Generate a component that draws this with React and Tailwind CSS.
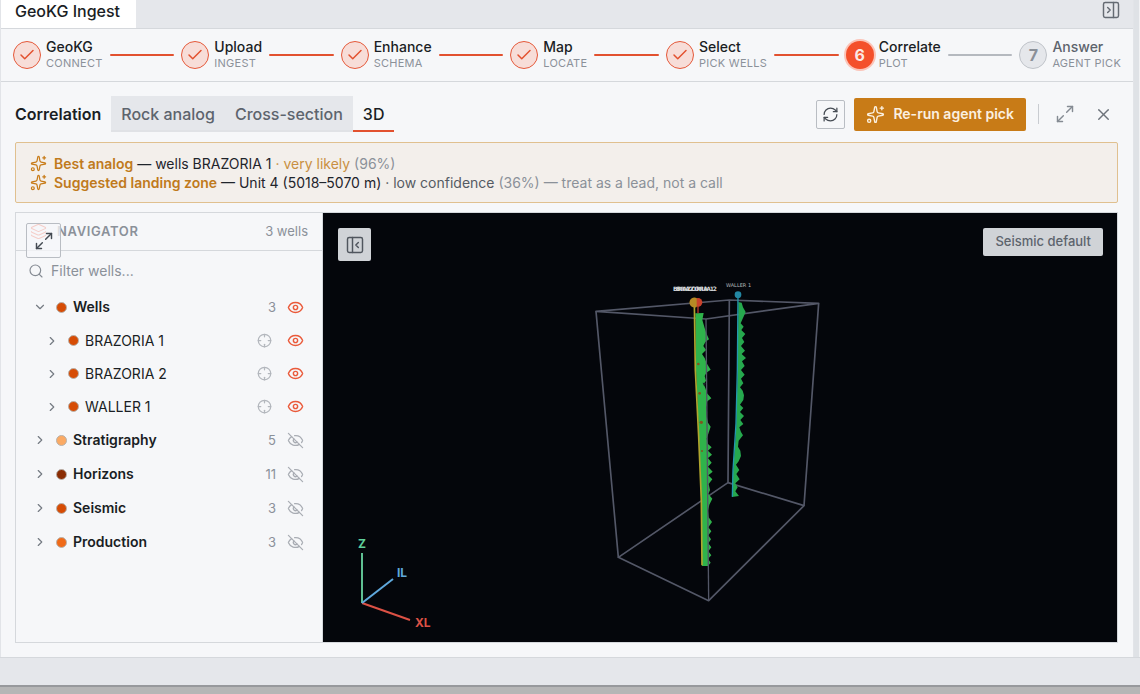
import { Fragment, useState } from 'react';
import {
	Check,
	ChevronDown,
	ChevronRight,
	Crosshair,
	Eye,
	EyeOff,
	Layers,
	Maximize2,
	PanelLeftClose,
	PanelRightClose,
	RefreshCw,
	Search,
	Sparkles,
	X,
} from 'lucide-react';

const STEPS = [
	{ title: 'GeoKG', sub: 'Connect' },
	{ title: 'Upload', sub: 'Ingest' },
	{ title: 'Enhance', sub: 'Schema' },
	{ title: 'Map', sub: 'Locate' },
	{ title: 'Select', sub: 'Pick wells' },
	{ title: 'Correlate', sub: 'Plot' },
	{ title: 'Answer', sub: 'Agent pick' },
];
const CURRENT_STEP = 5;

const TABS = ['Rock analog', 'Cross-section', '3D'];

const LAYERS = [
	{ name: 'Wells', count: 3, dot: 'bg-[#d64c05]', visible: true, items: ['BRAZORIA 1', 'BRAZORIA 2', 'WALLER 1'] },
	{ name: 'Stratigraphy', count: 5, dot: 'bg-[#fbaa64]' },
	{ name: 'Horizons', count: 11, dot: 'bg-[#8a2d04]' },
	{ name: 'Seismic', count: 3, dot: 'bg-[#d64c05]' },
	{ name: 'Production', count: 3, dot: 'bg-[#f06a18]' },
];

function StepBadge({ index }) {
	if (index < CURRENT_STEP) {
		return (
			<span className="flex size-7 shrink-0 items-center justify-center rounded-full border border-[#e5593a] bg-[#f7ddd8] text-[#e2512f]">
				<Check size={18} strokeWidth={2} />
			</span>
		);
	}
	if (index === CURRENT_STEP) {
		return (
			<span className="flex size-7 shrink-0 items-center justify-center rounded-full bg-[#f4502b] text-base font-bold text-[#fbe9e4] ring-2 ring-[#fbc4b8]">
				{index + 1}
			</span>
		);
	}
	return (
		<span className="flex size-7 shrink-0 items-center justify-center rounded-full border border-[#bfc3c9] bg-[#e5e7eb] text-base font-bold text-[#8b9098]">
			{index + 1}
		</span>
	);
}

function Stepper() {
	return (
		<nav className="flex h-[53px] shrink-0 items-center border-b border-[#d5d8dc] pr-3 pl-3">
			{STEPS.map((step, i) => (
				<Fragment key={step.title}>
					{i > 0 && (
						<span className={`mx-[7px] h-[2px] flex-1 rounded-full ${i <= CURRENT_STEP ? 'bg-[#e2512f]' : 'bg-[#b5b9bf]'}`} />
					)}
					<div className="flex items-center gap-[5px] whitespace-nowrap">
						<StepBadge index={i} />
						<div>
							<div className={`text-sm leading-4 font-medium ${i > CURRENT_STEP ? 'text-[#5d646d]' : 'text-[#1a1e24]'}`}>{step.title}</div>
							<div className="text-[11px] leading-4 tracking-wide text-[#8b9199] uppercase">{step.sub}</div>
						</div>
					</div>
				</Fragment>
			))}
		</nav>
	);
}

function Toolbar() {
	const [tab, setTab] = useState('3D');
	return (
		<div className="flex h-[60px] shrink-0 items-center pt-1">
			<h1 className="mr-[10px] text-base font-semibold">Correlation</h1>
			<div role="tablist" className="flex">
				{TABS.map((name) => (
					<button
						key={name}
						role="tab"
						aria-selected={tab === name}
						onClick={() => setTab(name)}
						className={`h-9 border-b-2 px-[10px] pt-[2px] text-base font-medium ${tab === name ? 'border-[#e2512f]' : 'border-[#e0e2e6] bg-[#e5e7eb] text-[#5d646d]'}`}
					>
						{name}
					</button>
				))}
			</div>
			<div className="ml-auto flex items-center">
				<button aria-label="Refresh" className="flex size-[29px] items-center justify-center rounded-[2px] border border-[#b9bdc3] text-[#454b53]">
					<RefreshCw size={17} strokeWidth={1.75} />
				</button>
				<button className="ml-[9px] flex h-[33px] items-center gap-2 rounded-[2px] bg-[#c87b17] px-3 text-sm font-semibold text-[#fbf0e0]">
					<Sparkles size={19} strokeWidth={1.75} />
					Re-run agent pick
				</button>
				<span className="mr-[11px] ml-3 h-5 w-px bg-[#c9ccd1]" />
				<button aria-label="Expand" className="flex size-[30px] items-center justify-center text-[#858b93]">
					<Maximize2 size={20} strokeWidth={1.75} />
				</button>
				<button aria-label="Close" className="ml-2 flex size-[30px] items-center justify-center text-[#6d737b]">
					<X size={19} strokeWidth={1.75} />
				</button>
			</div>
		</div>
	);
}

function Suggestions() {
	return (
		<div className="shrink-0 rounded-[2px] border border-[#e0c08f] bg-[#f3efeb] px-[14px] pt-[11px] pb-[10px] text-sm leading-[19px] text-[#1f242b]">
			<p className="flex items-center gap-[7px]">
				<Sparkles size={17} strokeWidth={1.75} className="text-[#c87b17]" />
				<span>
					<b className="font-semibold text-[#c07a1c]">Best analog</b> — wells BRAZORIA 1 <span className="text-[#c98f42]">· very likely</span>{' '}
					<span className="text-[#8b9199]">(96%)</span>
				</span>
			</p>
			<p className="flex items-center gap-[7px]">
				<Sparkles size={17} strokeWidth={1.75} className="text-[#c87b17]" />
				<span>
					<b className="font-semibold text-[#c07a1c]">Suggested landing zone</b> — Unit 4 (5018–5070 m) <span className="text-[#555b63]">· low confidence</span>{' '}
					<span className="text-[#8b9199]">(36%) — treat as a lead, not a call</span>
				</span>
			</p>
		</div>
	);
}

function VisibilityButton({ name, visible }) {
	return (
		<button aria-label={`Toggle ${name}`} className={`ml-[11px] ${visible ? 'text-[#ea5a3a]' : 'text-[#a9adb4]'}`}>
			{visible ? <Eye size={17} strokeWidth={2} /> : <EyeOff size={17} strokeWidth={1.75} />}
		</button>
	);
}

function LayerGroup({ layer }) {
	const [open, setOpen] = useState(Boolean(layer.items));
	const Chevron = open ? ChevronDown : ChevronRight;
	return (
		<li>
			<div className="flex h-[34px] items-center pr-[18px] pl-[17px]">
				<button aria-label={`Expand ${layer.name}`} onClick={() => setOpen(!open)} className="text-[#757b83]">
					<Chevron size={14} strokeWidth={2} />
				</button>
				<span className={`mr-[6px] ml-[9px] size-[11px] rounded-full border border-[#b9b2ab] ${layer.dot}`} />
				<span className="font-semibold">{layer.name}</span>
				<span className="ml-auto text-[13px] text-[#8b9199]">{layer.count}</span>
				<VisibilityButton name={layer.name} visible={layer.visible} />
			</div>
			{open && layer.items && (
				<ul>
					{layer.items.map((name) => (
						<li key={name} className="flex h-[33px] items-center pr-[18px] pl-[29px]">
							<button aria-label={`Expand ${name}`} className="text-[#757b83]">
								<ChevronRight size={14} strokeWidth={2} />
							</button>
							<span className="mr-[6px] ml-[9px] size-[11px] rounded-full border border-[#b9b2ab] bg-[#d64c05]" />
							<span>{name}</span>
							<button aria-label={`Locate ${name}`} className="mr-1 ml-auto text-[#b3b7bd]">
								<Crosshair size={15} strokeWidth={2} />
							</button>
							<VisibilityButton name={name} visible />
						</li>
					))}
				</ul>
			)}
		</li>
	);
}

function Navigator() {
	return (
		<aside className="relative flex w-[307px] shrink-0 flex-col border-r border-[#d5d8dc]">
			<div className="flex h-[38px] shrink-0 items-center border-b border-[#d5d8dc] pr-[14px] pl-[14px]">
				<Layers size={17} strokeWidth={1.5} className="text-[#f0553a]" />
				<h2 className="ml-[10px] text-[13px] font-semibold tracking-wider text-[#8b9199] uppercase">Navigator</h2>
				<span className="ml-auto text-[13px] text-[#8b9199]">3 wells</span>
			</div>
			<button
				aria-label="Expand navigator"
				className="absolute top-[10px] left-[10px] flex size-[35px] items-center justify-center rounded-[2px] border border-[#b9bdc3] bg-[#f6f7f9]/75 text-[#454b53]"
			>
				<Maximize2 size={20} strokeWidth={1.75} />
			</button>
			<label className="flex h-[39px] shrink-0 items-center gap-[7px] pr-4 pl-3 text-[#858b93]">
				<Search size={16} strokeWidth={1.75} />
				<input type="text" aria-label="Filter wells" placeholder="Filter wells..." className="min-w-0 flex-1 text-sm outline-none placeholder:text-[#8b9199]" />
			</label>
			<ul className="text-sm">
				{LAYERS.map((layer) => (
					<LayerGroup key={layer.name} layer={layer} />
				))}
			</ul>
		</aside>
	);
}

function Scene() {
	return (
		<svg viewBox="-771 -171 2382 1287" className="absolute inset-0 h-full w-full">
			<g fill="none" stroke="#535767" strokeWidth="5" strokeLinejoin="round">
				<path d="M48 124 448 90 716 100 378 147Z" />
				<path d="M115 862 444 638 672 707 386 992Z" />
				<path d="M48 124 115 862M448 90 444 638M716 100 672 707" />
			</g>
			{/* WALLER 1 */}
			<path
				fill="#26a84e"
				d="M475 96 485 98 489 112 497 126 488 146 482 160 491 170 484 180 496 192 486 204 493 216 483 228 495 242 485 252 498 264 486 274 494 288 483 300 494 314 483 326 490 340 480 352 488 362 492 376 490 390 480 404 490 414 480 426 492 438 481 450 490 462 478 472 483 486 489 496 476 512 474 530 481 542 483 558 476 574 468 584 478 600 469 612 479 628 466 640 473 652 466 664 477 678 456 681 458 620 468 480 473 300Z"
			/>
			<path fill="none" stroke="#2397ae" strokeWidth="4" d="M474 74 472 300 468 460 459 600 457 680" />
			<circle cx="474" cy="74" r="10" fill="#2387a3" />
			{/* BRAZORIA 1 and 2 */}
			<path
				fill="#2fb34b"
				d="M346 130 371 129 367 150 374 174 379 190 387 208 376 216 370 228 378 240 366 252 374 264 380 280 392 299 379 308 374 318 378 332 371 342 376 354 381 370 394 385 382 394 378 410 380 440 384 458 392 470 386 488 380 506 384 522 395 532 384 542 396 554 384 564 395 578 384 590 398 605 385 616 397 628 386 642 390 660 385 672 397 686 388 704 384 722 386 742 396 756 385 772 394 784 385 796 393 808 385 820 394 832 385 844 394 856 384 866 392 878 384 888 366 888 364 760 362 640 356 480 348 300Z"
			/>
			<path fill="none" stroke="#b9352a" strokeWidth="4" d="M354 98V130" />
			<path fill="none" stroke="#b0a52e" strokeWidth="5" d="M343 100 346 300 356 500 364 690 366 886" />
			<path fill="none" stroke="#535767" strokeWidth="4" d="M378 147 386 992" />
			<g fill="#81561f">
				<circle cx="355" cy="282" r="4" />
				<circle cx="359" cy="370" r="4" />
				<circle cx="364" cy="457" r="5" />
				<circle cx="366" cy="543" r="3" />
				<path d="m368 338 10 2-6 8z" fill="#20262a" />
			</g>
			<circle cx="354" cy="97" r="13" fill="#c8412b" />
			<path fill="#b68a25" d="M350 84a15 15 0 1 0 0 27Z" />
			<g fill="#d5d7da" fontFamily='"DejaVu Sans", sans-serif' fontSize="15">
				<text x="438" y="50" fill="#b4b7bc">WALLER 1</text>
				<g fontSize="18" fontWeight="700">
					<text x="279" y="63">BRAZORIA 1</text>
					<text x="288" y="63">BRAZORIA 2</text>
				</g>
			</g>
		</svg>
	);
}

function AxisGizmo() {
	return (
		<svg width="90" height="100" viewBox="0 0 90 100" className="absolute bottom-2 left-6" fontSize="12" fontWeight="700" strokeWidth="2">
			<path stroke="#5fbf92" d="M15 69V19" />
			<path stroke="#dc5145" d="M15 69 63 86" />
			<path stroke="#5fa8dc" d="M15 69 46 45" />
			<text x="11" y="14" fill="#5fcf9c">Z</text>
			<text x="50" y="43" fill="#5fa8dc">IL</text>
			<text x="68" y="93" fill="#dc5145">XL</text>
		</svg>
	);
}

function Viewport() {
	return (
		<section className="relative min-w-0 flex-1 bg-[#04060b]">
			<Scene />
			<AxisGizmo />
			<button aria-label="Hide navigator" className="absolute top-[15px] left-[15px] flex size-[33px] items-center justify-center rounded-[2px] bg-[#d0d3d7] text-[#50565e]">
				<PanelLeftClose size={20} strokeWidth={1.75} />
			</button>
			<button className="absolute top-[15px] right-[14px] h-7 rounded-[2px] bg-[#d0d3d7] px-3 text-[13px] font-medium text-[#5d646d]">
				Seismic default
			</button>
		</section>
	);
}

export default function App() {
	return (
		<div className="flex h-screen flex-col bg-[#e5e7eb] font-['Inter','Liberation_Sans',sans-serif] text-[#1a1e24]">
			<div className="flex min-h-0 flex-1">
				<div className="flex min-w-0 flex-1 flex-col border-x border-[#e2e4e8] bg-[#f6f7f9]">
					<header className="flex h-[29px] shrink-0 items-start justify-between border-b border-[#d5d8dc] bg-[#e5e7eb]">
						<div className="h-7 bg-white pr-4 pl-[14px] text-base leading-[23px] font-medium">GeoKG Ingest</div>
						<button aria-label="Collapse panel" className="mr-3 text-[#656b73]">
							<PanelRightClose size={20} strokeWidth={1.75} />
						</button>
					</header>
					<Stepper />
					<main className="flex min-h-0 flex-1 flex-col pr-[15px] pb-[14px] pl-[14px]">
						<Toolbar />
						<Suggestions />
						<div className="mt-[9px] flex min-h-0 flex-1 border border-[#d5d8dc]">
							<Navigator />
							<Viewport />
						</div>
					</main>
				</div>
				<div className="w-[6px] shrink-0 border-r border-[#f1f2f4] bg-[#dfe2e6]" />
			</div>
			<footer className="h-[37px] shrink-0 border-t border-[#d5d8dc]">
				<div className="mt-[27px] h-[9px] border-t-2 border-[#97999c] bg-[#b6b6b6]" />
			</footer>
		</div>
	);
}
